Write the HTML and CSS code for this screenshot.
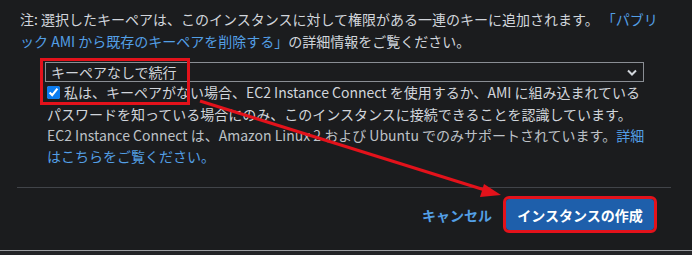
FILE: index.html
```html
<!DOCTYPE html>
<html lang="ja">
<head>
  <meta charset="UTF-8" />
  <title>インスタンスの作成</title>
  <link rel="stylesheet" href="styles.css">
</head>
<body>
  <div class="panel">
    <p class="note">注: 選択したキーペアは、このインスタンスに対して権限がある一連のキーに追加されます。 <a href="#">「パブリ<br>ック AMI から既存のキーペアを削除する」</a>の詳細情報をご覧ください。</p>

    <div class="field">
      <div class="select">
        <span>キーペアなしで続行</span>
        <svg class="chevron" width="10" height="7" viewBox="0 0 10 7"><path d="M1 1.5 L5 5.5 L9 1.5" fill="none" stroke="#d1d5db" stroke-width="2"/></svg>
      </div>
      <label class="ack">
        <input type="checkbox" checked>私は、キーペアがない場合、EC2 Instance Connect を使用するか、AMI に組み込まれている<br>パスワードを知っている場合にのみ、このインスタンスに接続できることを認識しています。
      </label>
      <p class="hint">EC2 Instance Connect は、Amazon Linux 2 および Ubuntu でのみサポートされています。<a href="#">詳細<br>はこちらをご覧ください。</a></p>
    </div>

    <div class="actions">
      <a class="cancel" href="#">キャンセル</a>
      <button class="primary">インスタンスの作成</button>
    </div>
  </div>
  <div class="bottom"></div>

  <!-- annotations -->
  <div class="mark"></div>
  <svg class="arrow" width="692" height="255" viewBox="0 0 692 255">
    <line x1="200" y1="101" x2="488" y2="191" stroke="#e3121b" stroke-width="3"/>
    <path d="M501 195 L484 184 L480 197 Z" fill="#e3121b"/>
  </svg>
</body>
</html>
```

FILE: styles.css
```css
body {
  margin: 0;
  background: #1b1c1e;
  color: #d1d5db;
  font-family: 'Noto Sans CJK JP', sans-serif;
  font-size: 14px;
  position: relative;
  height: 255px;
  overflow: hidden;
}

a {
  color: #539fe5;
  text-decoration: none;
}

.panel {
  padding: 8px 0 0;
}

.note {
  margin: 0;
  padding: 0 20px;
  line-height: 22px;
  white-space: nowrap;
}

.field {
  margin: 10px 0 0 45px;
  width: 599px;
}

.select {
  height: 18px;
  border: 1px solid #8a8e94;
  display: flex;
  align-items: center;
  justify-content: space-between;
  padding: 0 6px 0 5px;
  line-height: 18px;
}

.ack {
  display: block;
  padding-left: 2px;
  line-height: 21.5px;
  white-space: nowrap;
}

.ack input {
  width: 13px;
  height: 13px;
  margin: 0 4px 0 0;
  vertical-align: -1px;
  accent-color: #0b7cf0;
}

.hint {
  margin: 0;
  padding-left: 2px;
  line-height: 21px;
  color: #bdc1c6;
  white-space: nowrap;
}

.actions {
  margin: 20px 21px 0 17px;
  border-top: 1px solid #414449;
  display: flex;
  justify-content: flex-end;
  align-items: center;
  gap: 14px;
  padding: 11px 17px 0 0;
}

.cancel {
  font-weight: bold;
}

.primary {
  background: #1e5fab;
  color: #fff;
  font-family: inherit;
  font-size: 14px;
  font-weight: bold;
  border: none;
  border-radius: 3px;
  height: 31px;
  width: 148px;
  outline: 3px solid #e3121b;
}

.bottom {
  position: absolute;
  left: 0;
  right: 0;
  top: 250px;
  height: 5px;
  border-top: 1px solid #9a9ca0;
  background: #232427;
}

.mark {
  position: absolute;
  left: 40px;
  top: 58px;
  width: 144px;
  height: 41px;
  border: 3px solid #e3121b;
}

.arrow {
  position: absolute;
  left: 0;
  top: 0;
}
```
